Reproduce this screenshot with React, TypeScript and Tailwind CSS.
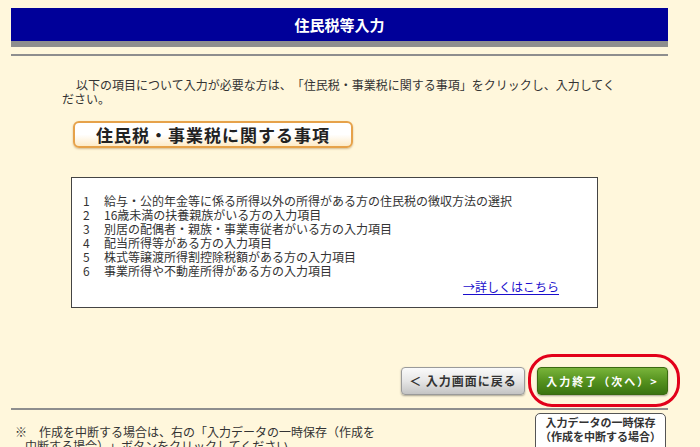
import React from "react";

const items = [
  "給与・公的年金等に係る所得以外の所得がある方の住民税の徴収方法の選択",
  "16歳未満の扶養親族がいる方の入力項目",
  "別居の配偶者・親族・事業専従者がいる方の入力項目",
  "配当所得等がある方の入力項目",
  "株式等譲渡所得割控除税額がある方の入力項目",
  "事業所得や不動産所得がある方の入力項目",
];

export default function App() {
  return (
    <div
      className="w-[700px] h-[447px] overflow-hidden bg-[#fff7dc] text-[#333] pt-[8px] [text-spacing-trim:space-all]"
      style={{ fontFamily: '"Noto Sans CJK JP", "Noto Sans", sans-serif' }}
    >
      {/* header */}
      <div className="ml-[11px] w-[657px]">
        <div className="h-[33px] bg-[#000099] flex items-center justify-center text-white font-bold text-[15px] leading-none">
          住民税等入力
        </div>
        <div className="h-[6px] bg-[#8e8e8e]" />
        <div className="h-[7px]" />
        <div className="h-[2px] bg-[#8e8e8e]" />
      </div>

      {/* intro */}
      <p className="ml-[62px] mt-[22px] w-[558px] text-[12px] leading-[14px] indent-[14px] text-[#333]">
        以下の項目について入力が必要な方は、「住民税・事業税に関する事項」をクリックし、入力してください。
      </p>

      {/* section button */}
      <div className="ml-[73px] mt-[15px] w-[280px] h-[27px] rounded-[6px] border-2 border-[#e6a24a] bg-gradient-to-b from-white via-white to-[#fdebc8] shadow-[0_1px_2px_rgba(150,100,30,0.4)] flex items-center justify-center">
        <span className="font-bold text-[17px] leading-none tracking-[1px] text-[#222]">
          住民税・事業税に関する事項
        </span>
      </div>

      {/* list box */}
      <div className="ml-[71px] mt-[29px] w-[527px] h-[131px] border border-[#444] bg-white pt-[16px] pl-[11px] pr-[38px]">
        <div className="text-[12px] leading-[14px] text-[#333]">
          {items.map((t, i) => (
            <div key={i} className="flex">
              <span className="w-[21px] shrink-0">{i + 1}</span>
              <span>{t}</span>
            </div>
          ))}
        </div>
        <div className="flex justify-end mt-[2px]">
          <a className="text-[12px] leading-[14px] text-[#1a0dcc] underline underline-offset-2 cursor-pointer">
            →詳しくはこちら
          </a>
        </div>
      </div>

      {/* nav buttons */}
      <div className="relative mt-[59px] ml-[401px] w-[267px] h-[28px] flex gap-[12px]">
        <div className="w-[124px] h-[28px] rounded-[4px] border border-[#9a9a9a] bg-gradient-to-b from-[#fafafa] via-[#e6e6e6] to-[#c4c4c4] shadow-[0_1px_2px_rgba(0,0,0,0.35)] flex items-center justify-center">
          <span className="font-bold text-[12px] leading-none tracking-[1px] text-[#333]">
            ＜ 入力画面に戻る
          </span>
        </div>
        <div className="w-[131px] h-[28px] rounded-[4px] border border-[#3a6a10] bg-gradient-to-b from-[#79b43a] via-[#55921e] to-[#3b7410] shadow-[0_1px_2px_rgba(0,0,0,0.35)] flex items-center justify-center">
          <span className="font-bold text-[11px] leading-none tracking-[2px] text-white">
            入力終了（次へ）&gt;
          </span>
        </div>
        <div className="absolute left-[127px] top-[-13px] w-[152px] h-[53px] rounded-[24px] border-[3px] border-[#e2001a]" />
      </div>

      {/* bottom line */}
      <div className="ml-[11px] mt-[13px] w-[657px] h-[2px] bg-[#8e8e8e]" />

      {/* footer */}
      <div className="flex mt-[15px]">
        <p className="ml-[15px] w-[363px] shrink-0 pl-[10px] -indent-[10px] text-[12px] leading-[14px] text-[#333]">
          ※　作成を中断する場合は、右の「入力データの一時保存（作成を中断する場合）」ボタンをクリックしてください。
        </p>
        <div className="ml-[157px] mt-[-12px] w-[131px] h-[40px] shrink-0 rounded-[5px] border-[1.5px] border-[#555] bg-white flex flex-col items-center pt-[1px]">
          <span className="font-bold text-[11px] leading-[14px] whitespace-nowrap text-[#333]">入力データの一時保存</span>
          <span className="font-bold text-[11px] leading-[14px] whitespace-nowrap text-[#333]">（作成を中断する場合）</span>
        </div>
      </div>
    </div>
  );
}
